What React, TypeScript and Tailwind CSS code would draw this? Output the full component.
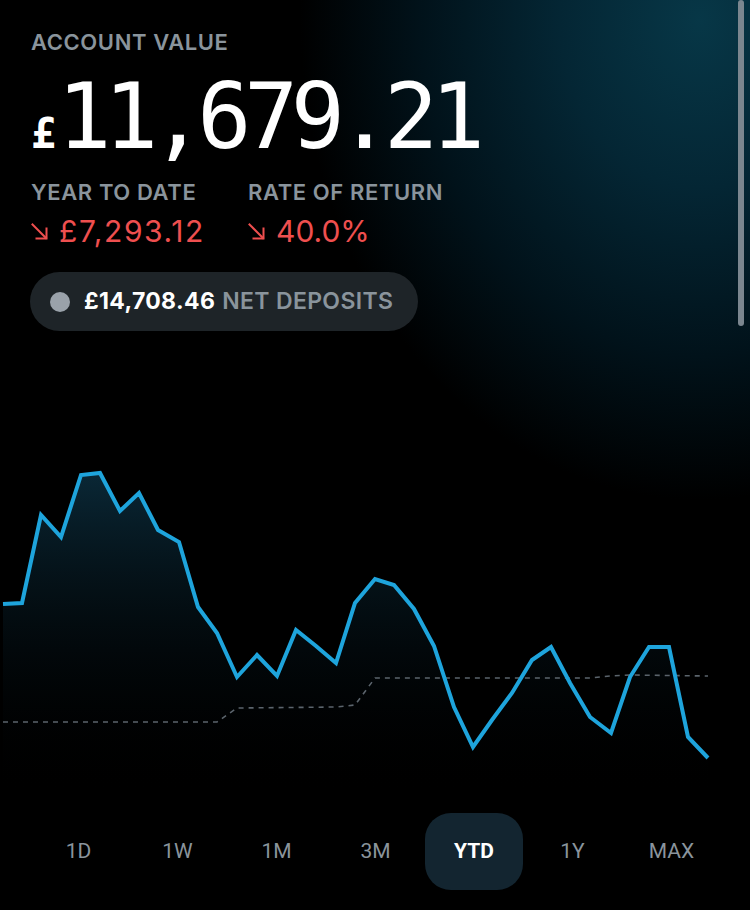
import React from 'react';

const line: [number, number][] = [
  [3, 604], [22, 603], [41, 515], [61, 537], [81, 475], [100, 473], [120, 511],
  [139, 493], [158, 530], [179, 542], [198, 607], [217, 633], [237, 677],
  [257, 655], [277, 676], [296, 630], [316, 646], [336, 663], [355, 603],
  [375, 579], [394, 585], [414, 609], [434, 646], [454, 707], [473, 747],
  [492, 720], [512, 693], [532, 660], [551, 647], [570, 683], [590, 717],
  [611, 733], [630, 677], [649, 647], [669, 647], [688, 737], [708, 758],
];

const deposits: [number, number][] = [
  [3, 722], [217, 722], [237, 708], [336, 707], [355, 705], [375, 678],
  [590, 678], [610, 676], [630, 675], [708, 676],
];

const ranges = ['1D', '1W', '1M', '3M', 'YTD', '1Y', 'MAX'];

// chart svg starts at page y = 340
const OFFSET = 340;
const pts = (arr: [number, number][]) => arr.map(([x, y]) => `${x},${y - OFFSET}`).join(' ');

function DownArrow() {
  return (
    <svg width="17" height="17" viewBox="0 0 17 17" fill="none" stroke="#ef4f4f" strokeWidth="2" strokeLinecap="square">
      <path d="M1.5 1.5 L15 15" />
      <path d="M5.5 15.5 H15.5 V5.5" />
    </svg>
  );
}

export default function App() {
  const area = `${pts(line)} 708,455 3,455`;
  return (
    <div
      className="relative w-[750px] h-[910px] overflow-hidden bg-black bg-[radial-gradient(ellipse_400px_480px_at_700px_20px,#073747_0%,#042634_35%,#01121a_70%,#000000_100%)]"
      style={{ fontFamily: 'Inter, "Liberation Sans", sans-serif' }}
    >
      <div className="px-[31px] pt-[29px]">
        <div className="text-[22px] font-semibold leading-[26px] tracking-[0.6px] text-[#8a949c]">ACCOUNT VALUE</div>
        <div
          className="flex items-baseline h-[90px] leading-[90px] mt-[17px] text-white"
          style={{ fontFamily: '"DejaVu Sans Mono", monospace' }}
        >
          <span className="text-[42px] font-bold mr-[1px]">£</span>
          <span className="text-[90px] tracking-[-7.5px]">11,679.21</span>
        </div>
        <div className="flex mt-[17px]">
          <div className="w-[217px]">
            <div className="text-[22px] font-semibold leading-[26px] tracking-[0.6px] text-[#8a949c]">YEAR TO DATE</div>
            <div className="flex items-center gap-[11px] mt-[8px] text-[30px] leading-[36px] text-[#ef4f4f]">
              <DownArrow />
              <span className="tracking-[1.6px]">£7,293.12</span>
            </div>
          </div>
          <div>
            <div className="text-[22px] font-semibold leading-[26px] tracking-[0.6px] text-[#8a949c]">RATE OF RETURN</div>
            <div className="flex items-center gap-[11px] mt-[8px] text-[30px] leading-[36px] text-[#ef4f4f]">
              <DownArrow />
              <span>40.0%</span>
            </div>
          </div>
        </div>
        <div className="inline-flex items-center h-[59px] mt-[23px] -ml-[1px] pl-[20px] pr-[25px] rounded-full bg-[#1e2428] tracking-[0.35px]">
          <span className="w-[20px] h-[20px] rounded-full bg-[#9aa2aa]" />
          <span className="ml-[14px] text-[23px] font-bold text-white">£14,708.46</span>
          <span className="ml-[7px] text-[23px] font-semibold text-[#8a949c]">NET DEPOSITS</span>
        </div>
      </div>

      <svg className="block mt-[9px]" width="750" height="455" viewBox="0 0 750 455">
        <defs>
          <linearGradient id="fill" x1="0" y1="0" x2="0" y2="1">
            <stop offset="0%" stopColor="#0b2c3c" stopOpacity="0.9" />
            <stop offset="100%" stopColor="#000000" stopOpacity="0" />
          </linearGradient>
        </defs>
        <polygon points={area} fill="url(#fill)" />
        <polyline points={pts(deposits)} fill="none" stroke="#5b646c" strokeWidth="1.6" strokeDasharray="5 5" />
        <polyline points={pts(line)} fill="none" stroke="#1ea4dc" strokeWidth="4" strokeLinejoin="miter" strokeLinecap="butt" />
      </svg>

      <div className="flex items-center px-[29px] mt-[18px]">
        {ranges.map((r) => (
          <div
            key={r}
            className={
              r === 'YTD'
                ? 'w-[98px] h-[77px] flex items-center justify-center rounded-[26px] bg-[#132530] text-white font-bold text-[21px]'
                : 'w-[99px] h-[77px] flex items-center justify-center text-[#8a949c] text-[21px]'
            }
            style={{ fontFamily: '"Roboto", "Liberation Sans", sans-serif' }}
          >
            {r}
          </div>
        ))}
      </div>

      <div className="absolute right-[6px] top-0 w-[6px] h-[326px] rounded-full bg-[#7b868f]" />
    </div>
  );
}
